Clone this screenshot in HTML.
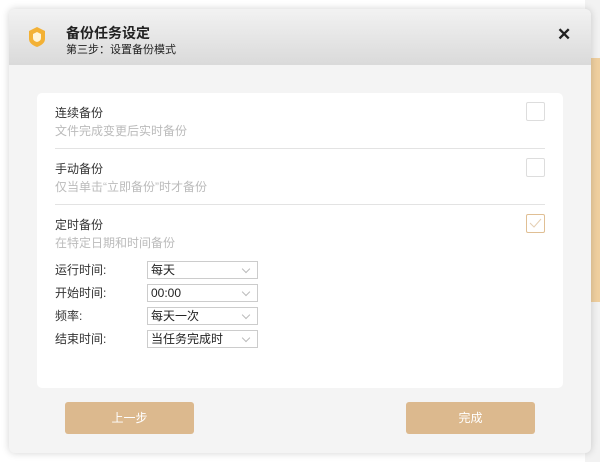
<!DOCTYPE html>
<html><head><meta charset="utf-8"><style>
*{margin:0;padding:0;box-sizing:border-box}
body{width:600px;height:462px;background:#fff;position:relative;overflow:hidden;font-family:"Liberation Sans","Noto Sans CJK SC",sans-serif;font-size:12px;color:#333}
.bg1{position:absolute;left:585px;top:0;width:15px;height:462px;background:#f2f2f2}
.bg2{position:absolute;left:585px;top:58px;width:15px;height:244px;background:#efcf9f}
.dlg{position:absolute;left:9px;top:9px;width:582px;height:444px;background:#f4f4f4;border-radius:6px;box-shadow:0 0 8px rgba(0,0,0,.18);overflow:hidden}
.hd{height:56px;background:linear-gradient(#f2f2f2,#dadada);position:relative}
.t1{position:absolute;left:57px;top:14px;font-size:14px;font-weight:bold;color:#222}
.t2{position:absolute;left:57px;top:32px;font-size:11px;color:#222}
.x{position:absolute;left:548px;top:16px;font-size:17px;font-weight:bold;color:#222}
.card{position:absolute;left:28px;top:84px;width:526px;height:295px;background:#fff;border-radius:5px}
.tt{position:absolute;left:18px;font-size:12px;color:#333}
.st{position:absolute;left:18px;font-size:12px;color:#bbb}
.sep{position:absolute;left:18px;width:490px;height:1px;background:#e3e3e3}
.cb{position:absolute;left:489px;width:19px;height:19px;border:1px solid #ddd;border-radius:2px}
.lb{position:absolute;left:18px;font-size:12px;color:#333}
.sel{position:absolute;left:110px;width:111px;height:18px;border:1px solid #ccc;font-size:12px;line-height:16px;padding-left:3px;color:#222}
.sel:after{content:"";position:absolute;right:8px;top:4px;width:5px;height:5px;border-right:1px solid #bbb;border-bottom:1px solid #bbb;transform:rotate(45deg)}
.btn{position:absolute;top:393px;width:129px;height:32px;background:#dcb98e;border-radius:3px;color:#fff;text-align:center;line-height:32px;font-size:12px}
</style></head><body>
<div class="bg1"></div><div class="bg2"></div>
<div class="dlg">
<div class="hd">
<svg style="position:absolute;left:18px;top:17px" width="20" height="22" viewBox="0 0 20 22"><path d="M10 1 L18 5 L18 13 Q18 18 10 21 Q2 18 2 13 L2 5 Z" fill="#f3b135"/><path d="M10 6 L14 8 L14 12 Q14 15 10 16 Q6 15 6 12 L6 8 Z" fill="#fff4d8"/></svg>
<div class="t1">备份任务设定</div><div class="t2">第三步：设置备份模式</div><div class="x">✕</div>
</div>
<div class="card">
<div class="tt" style="top:11px">连续备份</div><div class="st" style="top:29px">文件完成变更后实时备份</div>
<div class="cb" style="top:9px"></div><div class="sep" style="top:55px"></div>
<div class="tt" style="top:67px">手动备份</div><div class="st" style="top:85px">仅当单击“立即备份”时才备份</div>
<div class="cb" style="top:65px"></div><div class="sep" style="top:111px"></div>
<div class="tt" style="top:123px">定时备份</div><div class="st" style="top:141px">在特定日期和时间备份</div>
<div class="cb" style="top:121px;border-color:#e0bf94"><svg width="17" height="17" viewBox="0 0 17 17" style="position:absolute;left:0;top:0"><path d="M3 8 L7 12 L14 4" fill="none" stroke="#e5cfb3" stroke-width="1"/></svg></div>
<div class="lb" style="top:168px">运行时间:</div><div class="sel" style="top:168px">每天</div>
<div class="lb" style="top:191px">开始时间:</div><div class="sel" style="top:191px">00:00</div>
<div class="lb" style="top:214px">频率:</div><div class="sel" style="top:214px">每天一次</div>
<div class="lb" style="top:237px">结束时间:</div><div class="sel" style="top:237px">当任务完成时</div>
</div>
<div class="btn" style="left:56px">上一步</div>
<div class="btn" style="left:397px">完成</div>
</div>
</body></html>
